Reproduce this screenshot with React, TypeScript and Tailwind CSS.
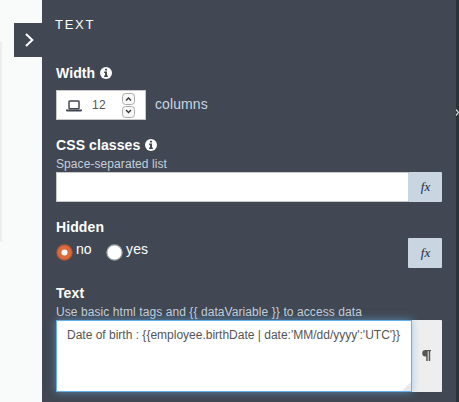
import React from "react";

function InfoIcon() {
  return (
    <svg className="ml-[4.5px] h-3 w-3 shrink-0" viewBox="0 0 12 12" aria-label="info">
      <circle cx="6" cy="6" r="6" fill="#fff" />
      <path d="M5 1.7h2v1.7H5zM4.1 4.5H7v4h.9V10H4.1V8.5H5V6h-.9z" fill="#414853" />
    </svg>
  );
}

function Label({ children, info = false }: { children: React.ReactNode; info?: boolean }) {
  return (
    <div className="flex h-5 items-center text-[14px] font-bold leading-5 tracking-[0.1px] text-white">
      {children}
      {info && <InfoIcon />}
    </div>
  );
}

function Help({ children }: { children: React.ReactNode }) {
  return <div className="h-[17px] whitespace-nowrap text-[12px] leading-[18px] tracking-[0.08px] text-[#c5cfdd]">{children}</div>;
}

function FxButton() {
  return (
    <button className="flex h-[30px] w-[34px] shrink-0 items-center justify-center rounded-[1px] bg-[#cad5e2]">
      <span className="-mt-px pl-px font-['Liberation_Serif',serif] text-[13px] italic leading-none text-[#152c43]">fx</span>
    </button>
  );
}

function SpinButton({ up = false }: { up?: boolean }) {
  return (
    <svg className="block h-3 w-[13px]" viewBox="0 0 13 12" fill="none">
      <rect x=".5" y=".5" width="12" height="11" rx="3" fill="#f8f8f8" stroke="#aaa" />
      <path d={up ? "M4 7.5 6.5 5 9 7.5" : "M4 4 6.5 6.5 9 4"} stroke="#333" strokeWidth="1.3" />
    </svg>
  );
}

function Radio({ checked = false }: { checked?: boolean }) {
  return (
    <svg className="mt-[5px] h-[17px] w-[17px] shrink-0" viewBox="0 0 17 17">
      <circle cx="8.5" cy="8.5" r="7.6" fill={checked ? "#dc6a3c" : "#fff"} stroke={checked ? "#b65530" : "#a5a7a9"} strokeWidth="1.2" />
      {checked && <circle cx="8.5" cy="8.5" r="3" fill="#fff" />}
    </svg>
  );
}

export default function App() {
  return (
    <div className="flex h-[402px] w-[459px] overflow-hidden bg-[#f9fbfa] font-['Liberation_Sans',Arial,sans-serif]">
      <div className="flex w-[42px] shrink-0 items-start justify-between">
        <div className="mt-[42px] h-[200px] w-[3px] bg-gradient-to-r from-[#e8eae9] to-[#f9fbfa]" />
        <button className="mt-[23px] flex h-[34px] w-7 items-center justify-center bg-[#414853]">
          <svg className="ml-[3px] h-4 w-4" viewBox="0 0 16 16" fill="none">
            <path d="M4 2 10.3 8 4 14" stroke="#fff" strokeWidth="2" />
          </svg>
        </button>
      </div>
      <main className="flex w-[414px] shrink-0 flex-col bg-[#414853] pl-3.5 pr-3.5 pt-[15px]">
        <h1 className="-ml-px h-5 text-[13px] leading-5 tracking-[1.7px] text-white">TEXT</h1>

        <section className="mt-7 h-[72px]">
          <Label info>Width</Label>
          <div className="mt-[7px] flex items-center">
            <div className="flex h-[30px] w-[90px] items-center border border-[#c8c8c8] bg-white pl-[9px]">
              <svg className="mt-px h-3 w-4" viewBox="0 0 16 12" fill="none">
                <path d="M3 8V1.700Q3 1 3.700 1h8.600q.7 0 .7.7V8q0 .7-.7.7H3.700Q3 8.700 3 8Z" stroke="#414853" strokeWidth="1.500" />
                <path d="M0 9.500h16v.8q0 1.200-1.500 1.200h-13Q0 11.500 0 10.300Z" fill="#414853" />
              </svg>
              <span className="ml-[10px] w-[30px] text-[12px] leading-none tracking-[0.4px] text-[#555]">12</span>
              <div className="flex flex-col gap-px">
                <SpinButton up />
                <SpinButton />
              </div>
            </div>
            <span className="mb-0.5 ml-[9px] text-[14px] leading-5 tracking-[0.1px] text-[#cbd5e2]">columns</span>
          </div>
        </section>

        <section className="h-[82px]">
          <Label info>CSS classes</Label>
          <Help>Space-separated list</Help>
          <div className="flex">
            <input className="h-[30px] min-w-0 grow border border-r-0 border-[#c8c8c8] bg-white outline-none" />
            <FxButton />
          </div>
        </section>

        <section className="h-[66px]">
          <Label>Hidden</Label>
          <div className="flex justify-between">
            <div className="flex pt-[2px] text-[14px] leading-5 text-white">
              <label className="flex"><Radio checked /><span className="ml-[3px]">no</span></label>
              <label className="ml-[14.5px] flex"><Radio /><span className="ml-[3px] tracking-[0.1px]">yes</span></label>
            </div>
            <div className="pt-px"><FxButton /></div>
          </div>
        </section>

        <section>
          <Label>Text</Label>
          <Help>Use basic html tags and {"{{ dataVariable }}"} to access data</Help>
          <div className="flex">
            <div className="relative z-10 h-[72px] w-[356px] shrink-0 border border-[#66afe9] bg-white px-[10px] pt-[6px] text-[12px] leading-[17px] text-[#555] shadow-[0_0_8px_rgba(102,175,233,0.6)]">
              <div className="whitespace-nowrap">{"Date of birth : {{employee.birthDate | date:'MM/dd/yyyy':'UTC'}}"}</div>
              <svg className="absolute bottom-0 right-0 h-[9px] w-[9px]" viewBox="0 0 9 9">
                <path d="M9 0v9H0Z" fill="#e8e8e8" />
              </svg>
            </div>
            <button className="flex h-[72px] w-[30px] shrink-0 items-center justify-center rounded-r-[1px] bg-[#eee] text-[#555]">
              <svg className="-ml-[2px] -mt-px h-[11px] w-[9px]" viewBox="0 0 9 11">
                <path d="M3.500 0H9V1.300H8.200V11H6.700V1.300H5.700V11H4.200V6.500H3.500A3.250 3.250 0 0 1 3.500 0Z" fill="#555" />
              </svg>
            </button>
          </div>
        </section>
      </main>
      <aside className="w-[3px] shrink-0 overflow-hidden bg-[#2c3336] pt-[109px]">
        <svg className="h-[7px] w-[3px]" viewBox="0 0 3 7" fill="none">
          <path d="M0 .5 2.500 3.500 0 6.500" stroke="#ddd" strokeWidth="1.2" />
        </svg>
      </aside>
    </div>
  );
}
